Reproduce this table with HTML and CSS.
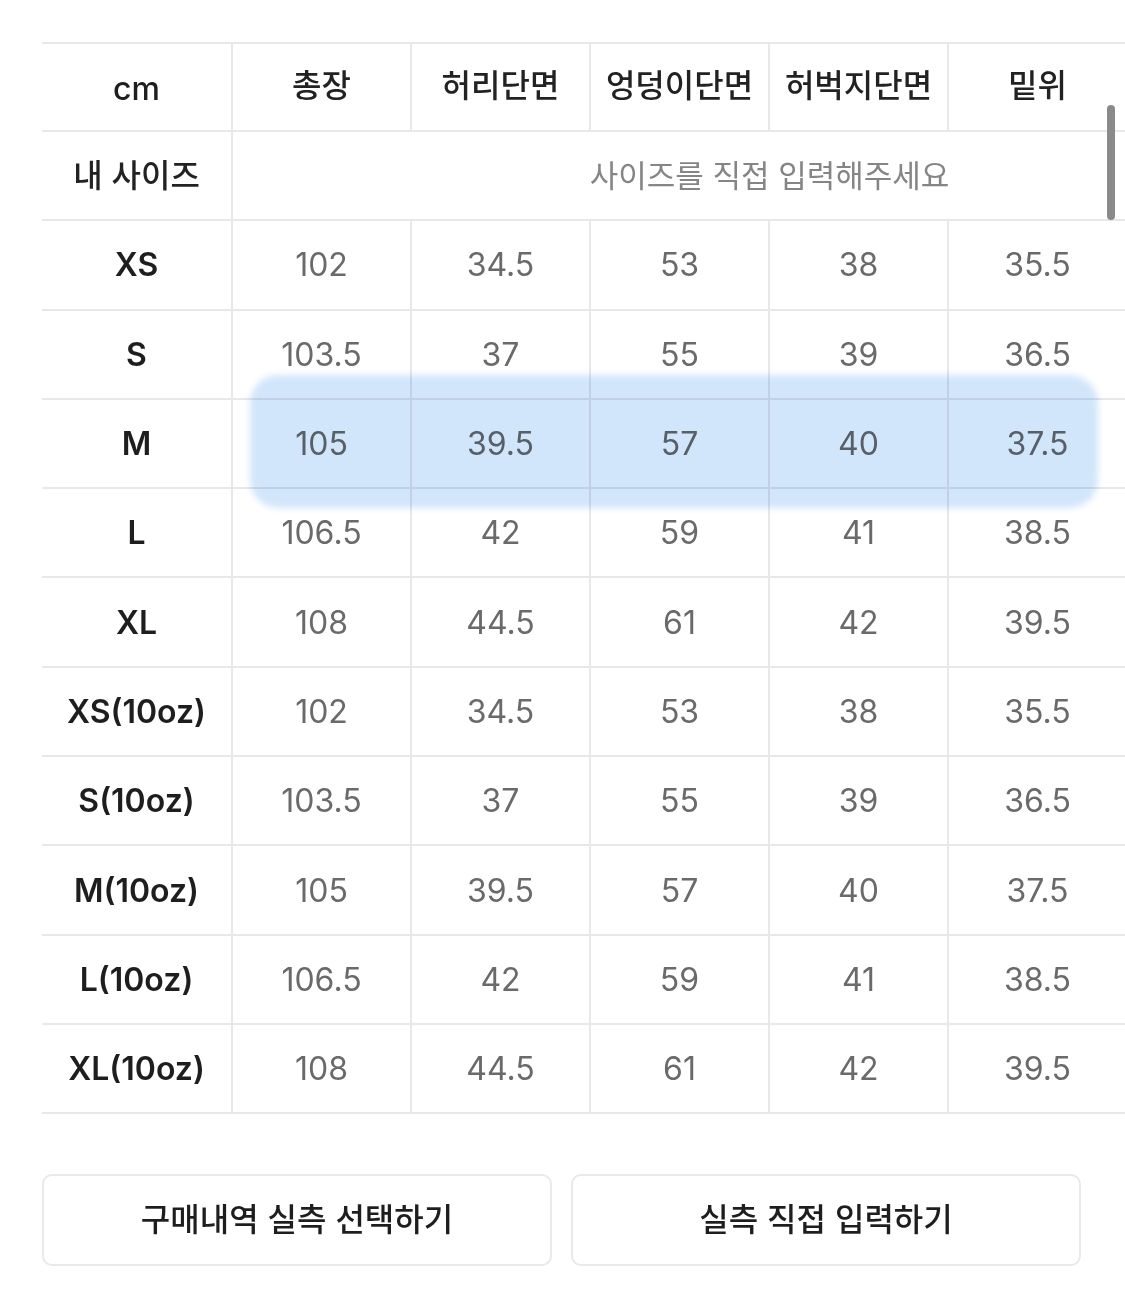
FILE: index.html
```html
<!DOCTYPE html>
<html lang="ko">
<head>
<meta charset="utf-8">
<title>사이즈</title>
<link rel="stylesheet" href="styles.css">
</head>
<body>
<div class="page">
  <div class="table-wrap">
    <table class="size-table">
      <colgroup>
        <col class="c-label">
        <col class="c-val"><col class="c-val"><col class="c-val"><col class="c-val"><col class="c-val"><col class="c-val">
      </colgroup>
      <thead>
        <tr class="head">
          <th class="label latin">cm</th>
          <th>총장</th>
          <th>허리단면</th>
          <th>엉덩이단면</th>
          <th>허벅지단면</th>
          <th>밑위</th>
          <th></th>
        </tr>
      </thead>
      <tbody>
        <tr>
          <td class="label kr">내 사이즈</td>
          <td class="input" colspan="6">사이즈를 직접 입력해주세요</td>
        </tr>
        <tr><td class="label">XS</td><td>102</td><td>34.5</td><td>53</td><td>38</td><td>35.5</td><td></td></tr>
        <tr><td class="label">S</td><td>103.5</td><td>37</td><td>55</td><td>39</td><td>36.5</td><td></td></tr>
        <tr><td class="label">M</td><td>105</td><td>39.5</td><td>57</td><td>40</td><td>37.5</td><td></td></tr>
        <tr><td class="label">L</td><td>106.5</td><td>42</td><td>59</td><td>41</td><td>38.5</td><td></td></tr>
        <tr><td class="label">XL</td><td>108</td><td>44.5</td><td>61</td><td>42</td><td>39.5</td><td></td></tr>
        <tr><td class="label">XS(10oz)</td><td>102</td><td>34.5</td><td>53</td><td>38</td><td>35.5</td><td></td></tr>
        <tr><td class="label">S(10oz)</td><td>103.5</td><td>37</td><td>55</td><td>39</td><td>36.5</td><td></td></tr>
        <tr><td class="label">M(10oz)</td><td>105</td><td>39.5</td><td>57</td><td>40</td><td>37.5</td><td></td></tr>
        <tr><td class="label">L(10oz)</td><td>106.5</td><td>42</td><td>59</td><td>41</td><td>38.5</td><td></td></tr>
        <tr><td class="label">XL(10oz)</td><td>108</td><td>44.5</td><td>61</td><td>42</td><td>39.5</td><td></td></tr>
      </tbody>
    </table>
    <div class="highlight"></div>
    <div class="scrollbar"></div>
  </div>
  <div class="actions">
    <button class="btn">구매내역 실측 선택하기</button>
    <button class="btn">실측 직접 입력하기</button>
  </div>
</div>
</body>
</html>
```
FILE: styles.css
```css
html, body {
  margin: 0;
  padding: 0;
  background: #ffffff;
}
body {
  width: 1125px;
  height: 1297px;
  overflow: hidden;
  font-family: Inter, "Noto Sans CJK KR", sans-serif;
}
.page {
  padding: 42px 0 0 42px;
}
.table-wrap {
  position: relative;
  width: 1083px;
  overflow: hidden;
}
.size-table {
  border-collapse: collapse;
  table-layout: fixed;
  width: 1264px;
}
.c-label { width: 190px; }
.c-val { width: 179px; }
.size-table tr {
  height: 89.3px;
  border-top: 2px solid #e8e8e8;
  border-bottom: 2px solid #e8e8e8;
}
.size-table tr.head {
  height: 88px;
}
.size-table th,
.size-table td {
  padding: 0;
  text-align: center;
  vertical-align: middle;
  border-left: 2px solid #e8e8e8;
}
.size-table th.label,
.size-table td.label {
  border-left: none;
}
.size-table th {
  font-family: "Noto Sans CJK KR", sans-serif;
  font-size: 32px;
  font-weight: 500;
  color: #222222;
  padding-bottom: 9px;
}
.size-table th.latin {
  font-family: Inter, sans-serif;
  font-size: 32px;
  font-weight: 500;
  color: #1e1e1e;
  padding-top: 3px;
  padding-bottom: 0;
}
.size-table td {
  font-size: 32px;
  font-weight: 400;
  color: #6a6a6a;
}
.size-table td.label {
  font-weight: 600;
  color: #1e1e1e;
  font-size: 32px;
}
.size-table td.label.kr {
  font-family: "Noto Sans CJK KR", sans-serif;
  font-weight: 500;
  font-size: 32px;
  color: #222222;
  padding-bottom: 6px;
}
.size-table td.input {
  font-family: "Noto Sans CJK KR", sans-serif;
  font-size: 31px;
  font-weight: 400;
  color: #858585;
  padding-bottom: 4px;
}
.highlight {
  position: absolute;
  left: 208px;
  top: 333px;
  width: 848px;
  height: 133px;
  border-radius: 28px;
  background: #d2e6fb;
  mix-blend-mode: multiply;
  filter: blur(3px);
  pointer-events: none;
}
.scrollbar {
  position: absolute;
  left: 1065px;
  top: 63px;
  width: 8px;
  height: 115px;
  border-radius: 4px;
  background: #8a8a8a;
}
.actions {
  display: flex;
  gap: 19px;
  margin-top: 60px;
}
.btn {
  width: 510px;
  height: 92px;
  background: #ffffff;
  border: 2px solid #e9e9e9;
  border-radius: 10px;
  font-family: "Noto Sans CJK KR", sans-serif;
  font-size: 32px;
  font-weight: 500;
  color: #1e1e1e;
  padding: 0 0 6px 0;
}
```
